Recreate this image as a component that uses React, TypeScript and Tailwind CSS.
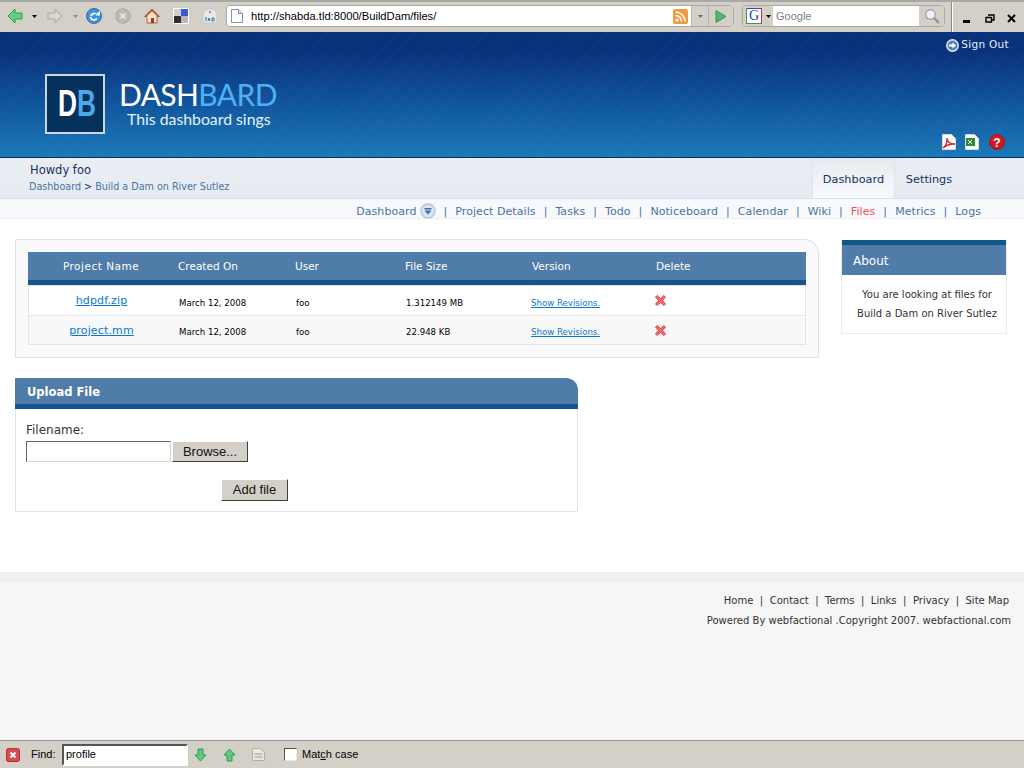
import React from 'react'

const navItems = ['Project Details', 'Tasks', 'Todo', 'Noticeboard', 'Calendar', 'Wiki', 'Files', 'Metrics', 'Logs']
const footerLinks = ['Home', 'Contact', 'Terms', 'Links', 'Privacy', 'Site Map']
const rows = [
  { name: 'hdpdf.zip', size: '1.312149 MB', bg: 'bg-white' },
  { name: 'project.mm', size: '22.948 KB', bg: 'bg-[#f8f8f8]' },
]
const tableCols = 'grid grid-cols-[146px_117px_110px_127px_124px_1fr]'

const BackIcon = () => (
  <svg width="16" height="16" viewBox="0 0 16 16">
    <path d="M1 8 8 1v4h7v6H8v4z" fill="#5fd47c" stroke="#2f9a50" />
  </svg>
)

const ForwardIcon = () => (
  <svg width="16" height="16" viewBox="0 0 16 16">
    <path d="M15 8 8 1v4H1v6h7v4z" fill="#d6d6d0" stroke="#a8a8a2" />
  </svg>
)

const Caret = ({ color = '#000' }: { color?: string }) => (
  <svg width="5" height="3" viewBox="0 0 5 3"><path d="M0 0h5L2.5 3z" fill={color} /></svg>
)

const Toolbar = () => (
  <div className="h-[32px] shrink-0 bg-[#d4d0c8] border-t-2 border-t-[#a8a8a4] flex items-center pl-[7px] pb-[2px]">
    <BackIcon />
    <span className="ml-[9px] mr-[10px]"><Caret /></span>
    <ForwardIcon />
    <span className="ml-[10px] mr-[8px]"><Caret color="#8a8a86" /></span>
    <svg width="16" height="16" viewBox="0 0 16 16">
      <circle cx="8" cy="8" r="7.5" fill="#3f93d8" stroke="#2a6fb0" />
      <path d="M4 8.5a4 4 0 0 1 7-2.5l-1.6 1.5H14V3l-1.7 1.6" fill="#fff" />
      <path d="M4.5 9a3.6 3.6 0 0 0 6.4 1.6" stroke="#fff" strokeWidth="1.6" fill="none" />
    </svg>
    <svg className="ml-[13px]" width="16" height="16" viewBox="0 0 16 16">
      <circle cx="8" cy="8" r="7.3" fill="#bdbab2" stroke="#aeaba4" />
      <path d="m5.5 5.5 5 5m0-5-5 5" stroke="#e4e2dc" strokeWidth="2" />
    </svg>
    <svg className="ml-[13px]" width="16" height="16" viewBox="0 0 16 16">
      <path d="M8 1 .5 8.5H3V15h10V8.500h2.500z" fill="#f3e4cc" stroke="#a5663a" />
      <path d="M8 1 .5 8.500h2L8 3.200l5.500 5.300h2z" fill="#b5582e" />
      <path d="M7 10h3v5H7z" fill="#a8321e" />
    </svg>
    <svg className="ml-[13px]" width="16" height="16" viewBox="0 0 16 16">
      <path d="M0 0h16v16H0z" fill="#fff" />
      <path d="M1 1h7v7H1z" fill="#d0d0d0" />
      <path d="M8 1h7v7H8z" fill="#3a5bd0" />
      <path d="M1 8h7v7H1z" fill="#2d2d2d" />
      <path d="M8 8h7v7H8z" fill="#b8b8b8" />
    </svg>
    <svg className="ml-[13px]" width="16" height="16" viewBox="0 0 16 16">
      <path d="M4 1h8l3 5v9H1V6z" fill="#e6e8ea" stroke="#c4c6c8" />
      <circle cx="8" cy="4" r="1.200" fill="#9a9a9a" />
      <path d="M3 10h2M4 10v3M6 13l1-3 1 3M10 10h2v3h-2z" stroke="#3d74a8" strokeWidth="1" fill="none" />
    </svg>
    <div className="ml-[8px] w-[508px] h-[22px] bg-white border border-[#a8a8a4] rounded-l-[3px] rounded-r-[5px] flex items-center overflow-hidden">
      <svg className="ml-[4px] shrink-0" width="12" height="14" viewBox="0 0 12 14">
        <path d="M.5.500h7l4 4v9H.5z" fill="#fff" stroke="#7f93ad" />
        <path d="M7.500.500v4h4" fill="#dfe6ef" stroke="#7f93ad" />
      </svg>
      <span className="ml-[8px] text-[11.200px] text-black flex-1 font-['Liberation_Sans',sans-serif]">http://shabda.tld:8000/BuildDam/files/</span>
      <svg className="shrink-0 mr-[3px]" width="15" height="15" viewBox="0 0 15 15">
        <rect width="15" height="15" rx="2" fill="#f49a3c" />
        <circle cx="4" cy="11" r="1.600" fill="#fff" />
        <path d="M2.500 6.500a6 6 0 0 1 6 6M2.500 3a9.500 9.500 0 0 1 9.500 9.500" stroke="#fff" strokeWidth="1.600" fill="none" />
      </svg>
      <div className="w-[17px] h-full bg-[#d4d0c8] border-l border-[#bbb8b0] flex items-center justify-center"><Caret color="#6a6a66" /></div>
      <div className="w-[25px] h-full bg-[#d4d0c8] border-l border-[#bbb8b0] flex items-center justify-center">
        <svg width="12" height="13" viewBox="0 0 12 13"><path d="M1 .500 11 6.500 1 12.500z" fill="#57b36e" stroke="#3c9458" /></svg>
      </div>
    </div>
    <div className="ml-[8px] w-[203px] h-[22px] bg-white border border-[#a8a8a4] rounded-[4px] flex items-center overflow-hidden">
      <div className="w-[30px] h-full bg-[#d4d0c8] flex items-center pl-[3px] gap-[4px] shrink-0">
        <span className="w-[16px] h-[16px] bg-white border border-[#2f9a50] border-t-[#2a50c8] border-r-[#c83030] flex items-center justify-center text-[14px] leading-none text-[#1a3fc0] font-['Liberation_Serif',serif]">G</span>
        <Caret />
      </div>
      <span className="ml-[3px] flex-1 text-[11px] text-[#808080] font-['Liberation_Sans',sans-serif]">Google</span>
      <div className="w-[25px] h-full bg-[#d4d0c8] flex items-center justify-center shrink-0">
        <svg width="16" height="16" viewBox="0 0 16 16">
          <circle cx="6.500" cy="6.500" r="4.800" fill="#eef2f6" stroke="#a0a8b0" strokeWidth="1.400" />
          <path d="m10 10 5 5" stroke="#8e9298" strokeWidth="2.200" />
        </svg>
      </div>
    </div>
    <div className="ml-[6px] -mb-[2px] self-stretch w-[2px] bg-[#8c8a84] border-r border-white" />
    <div className="flex items-center pt-[5px]">
      <svg className="ml-[10px] mt-[6px]" width="7" height="3" viewBox="0 0 7 3"><path d="M0 0h7v3H0z" fill="#000" /></svg>
      <svg className="ml-[15px]" width="10" height="9" viewBox="0 0 10 9">
        <path d="M3 1h6v5H6M1 3.500h5.500v4.500H1z" fill="none" stroke="#000" strokeWidth="1.400" />
      </svg>
      <svg className="ml-[12px]" width="9" height="9" viewBox="0 0 9 9"><path d="m1 1 7 7m0-7-7 7" stroke="#000" strokeWidth="2" /></svg>
    </div>
  </div>
)

const Logo = () => (
  <div className="flex items-start">
    <div className="w-[60px] h-[60px] bg-[#06315a] border-2 border-[#c9d5e1] flex items-center justify-center overflow-hidden pl-[3px] font-['Liberation_Sans',sans-serif] font-bold text-[36px] leading-none">
      <div className="flex scale-x-[0.73]">
        <span className="text-white">D</span>
        <span className="text-[#4aa8ee]">B</span>
      </div>
    </div>
    <div className="ml-[14px] mt-[3px] font-['Lato',sans-serif]">
      <div className="text-[30px] leading-[34px] font-normal text-white tracking-[-0.6px]">DASH<span className="text-[#4fb0f5]">BARD</span></div>
      <div className="ml-[8px] -mt-[2px] text-[15.800px] leading-[20px] text-[#e8f2fa]">This dashboard sings</div>
    </div>
  </div>
)

const HeaderIcons = () => (
  <div className="flex items-center justify-end pr-[19px] -mt-[6px]">
    <svg width="14" height="16" viewBox="0 0 14 16">
      <path d="M.500.500h9l4 4v11H.500z" fill="#fff" stroke="#d8d8d8" />
      <path d="M1 14c3-2 4-6 4-10 0 4 3 6 8 6-5 0-9 1-12 4z" fill="none" stroke="#d8262c" strokeWidth="1.300" />
    </svg>
    <svg className="ml-[9px]" width="14" height="16" viewBox="0 0 14 16">
      <path d="M.500.500h9l4 4v11H.500z" fill="#fff" stroke="#d8d8d8" />
      <path d="M1 4h9v8H1z" fill="#2f8a3f" />
      <path d="m3 6 4 4m0-4-4 4" stroke="#e8f4e8" />
    </svg>
    <svg className="ml-[10px]" width="16" height="16" viewBox="0 0 16 16">
      <circle cx="8" cy="8" r="7.500" fill="#d01820" stroke="#a81218" />
      <text x="8" y="12.500" textAnchor="middle" fontSize="12" fontWeight="700" fill="#fff" fontFamily="Liberation Sans">?</text>
    </svg>
  </div>
)

const Header = () => (
  <div className="h-[126px] shrink-0 flex flex-col border-b-[1px] border-[#06306c] bg-[repeating-linear-gradient(135deg,rgba(255,255,255,0.035)_0px,rgba(255,255,255,0.035)_1px,transparent_1px,transparent_3px),linear-gradient(180deg,#07307a_0%,#07307a_16%,#0f569f_60%,#1a78b8_100%)]">
    <div className="h-[24px] flex items-center justify-end pr-[15px] pt-[2px] gap-[2px] shrink-0">
      <svg width="13" height="13" viewBox="0 0 13 13">
        <circle cx="6.500" cy="6.500" r="5.700" fill="#5a82b8" stroke="#e8eef6" strokeWidth="1.400" />
        <path d="M3 5.500h3.500V3.500l3.500 3-3.500 3v-2H3z" fill="#fff" />
      </svg>
      <span className="text-[10.500px] text-[#e8eef6] tracking-[0.3px]">Sign Out</span>
    </div>
    <div className="pl-[45px] pt-[18px] h-[84px] shrink-0"><Logo /></div>
    <HeaderIcons />
  </div>
)

const SubHeader = () => (
  <div className="h-[41px] shrink-0 flex justify-between bg-gradient-to-b from-[#eaeef2] to-[#e6ebf4] border-b border-[#d8dde6]">
    <div className="pl-[30px] pt-[4px]">
      <div className="text-[11.500px] leading-[16px] text-[#17315f]">Howdy foo</div>
      <div className="text-[9.600px] leading-[18px] -ml-px text-[#4a74a0]">Dashboard <span className="text-[#17315f]">&gt;</span> Build a Dam on River Sutlez</div>
    </div>
    <div className="flex mr-[61px] text-[11.300px] text-[#17315f]">
      <div className="w-[83px] flex items-center justify-center pt-[4px] bg-gradient-to-b from-[#e6ebf0] to-[#f8f9fc] border-x border-[#dfe4ec]">Dashboard</div>
      <div className="w-[68px] flex items-center justify-center pt-[4px]">Settings</div>
    </div>
  </div>
)

const SubNav = () => (
  <div className="h-[20px] shrink-0 bg-[#f8f9fd] border-b border-[#eceef2] flex items-center justify-end pr-[43px] pt-[7px] text-[11px] tracking-[0.07px] text-[#4a74a0]">
    <span>Dashboard</span>
    <svg className="ml-[3px] -mt-[3px]" width="16" height="16" viewBox="0 0 16 16">
      <circle cx="8" cy="8" r="7" fill="#dbe6f3" stroke="#b4c6dc" strokeWidth="1.400" />
      <path d="M4.500 5h7v1.500h-7zM4.500 7.500h7L8 11.500z" fill="#3f6fa8" />
    </svg>
    {navItems.map((item) => (
      <React.Fragment key={item}>
        <span className="mx-[8px] text-[#4a74a0]">|</span>
        <span className={item === 'Files' ? 'text-[#f0505a]' : ''}>{item}</span>
      </React.Fragment>
    ))}
  </div>
)

const DeleteIcon = () => (
  <svg width="13" height="13" viewBox="0 0 13 13">
    <path d="M1.500 3 3 1.500l3.500 3 3.500-3L11.500 3l-3 3.500 3 3.500-1.500 1.500-3.500-3-3.500 3L1.500 10l3-3.500z" fill="#f4686c" stroke="#e04a50" strokeLinejoin="round" />
  </svg>
)

const FilesTable = () => (
  <div className="h-[119px] bg-[#fafafc] border border-[#dde1ea] rounded-tr-[14px] p-[12px]">
    <div className={`${tableCols} h-[28px] bg-[#4f7ca8] items-center pt-[2px] text-[10.500px] text-white [&>div]:pl-[4px]`}>
      <div className="text-center tracking-[0.5px] pr-[4px]">Project Name</div>
      <div>Created On</div>
      <div>User</div>
      <div>File Size</div>
      <div>Version</div>
      <div>Delete</div>
    </div>
    <div className="h-[5px] bg-[#13568c]" />
    <div className="border-x border-b border-[#e2e4e8] border-t-[1px] border-t-[#e2e4e8]">
      {rows.map((row, i) => (
        <div key={row.name} className={`${tableCols} h-[29px] items-center pt-[3px] text-[8.600px] text-black ${row.bg} ${i > 0 ? 'border-t border-[#e2e4e8]' : ''} [&>div]:pl-[4px]`}>
          <div className="text-center -mt-[1px] pr-[5px] text-[11px] tracking-[0.15px]"><a className="text-[#0a78d2] underline">{row.name}</a></div>
          <div className="pt-[2px]">March 12, 2008</div>
          <div className="pt-[2px]">foo</div>
          <div className="pt-[2px]">{row.size}</div>
          <div className="-ml-[2px] pt-[2px]"><a className="text-[#0a78d2] underline">Show Revisions.</a></div>
          <div className="-ml-[3px] -mt-[3px]"><DeleteIcon /></div>
        </div>
      ))}
    </div>
  </div>
)

const UploadForm = () => (
  <div className="w-[563px] mt-[20px]">
    <div className="h-[26px] bg-[#4f7ca8] rounded-tr-[12px] pl-[12px] pt-[3px] flex items-center text-[11.500px] font-bold text-white">Upload File</div>
    <div className="h-[5px] bg-[#13568c]" />
    <div className="h-[103px] border-x border-b border-[#e2e4e8] bg-white pl-[10px] pt-[13px]">
      <div className="text-[12px] leading-[16px] text-[#333]">Filename:</div>
      <div className="flex mt-[3px] items-start">
        <div className="w-[145px] h-[21px] bg-white border border-t-[#666] border-l-[#666] border-r-[#d4d0c8] border-b-[#d4d0c8]" />
        <div className="ml-[1px] w-[76px] h-[21px] bg-[#d4d0c8] border-r border-b border-r-[#404040] border-b-[#404040] border-t border-l border-t-white border-l-white flex items-center justify-center text-[13px] text-[#111] font-['Liberation_Sans',sans-serif]">Browse...</div>
      </div>
      <div className="mt-[17px] ml-[195px] w-[67px] h-[22px] bg-[#d4d0c8] border-r border-b border-r-[#404040] border-b-[#404040] border-t border-l border-t-white border-l-white flex items-center justify-center text-[13px] text-[#111] font-['Liberation_Sans',sans-serif]">Add file</div>
    </div>
  </div>
)

const AboutBox = () => (
  <div className="w-[166px] mt-[21px] ml-[22px] shrink-0 self-start border-x border-b border-[#e8ebf0]">
    <div className="h-[5px] bg-[#13568c]" />
    <div className="h-[30px] bg-[#4f7ca8] pl-[11px] pt-[1px] flex items-center text-[12px] text-white">About</div>
    <div className="h-[58px] pt-[10px] text-center text-[10px] leading-[19px] text-[#333] pl-[6px]">
      <div>You are looking at files for</div>
      <div>Build a Dam on River Sutlez</div>
    </div>
  </div>
)

const Footer = () => (
  <div className="flex-1 bg-[#f6f6f6] border-t-[10px] border-[#f0f0f0] pr-[15px] pt-[12px] text-[10px] text-[#333] flex flex-col items-end">
    <div className="leading-[14px]">
      {footerLinks.map((link, i) => (
        <span key={link}>{i > 0 && <span className="mx-[6.500px]">|</span>}{link}</span>
      ))}
    </div>
    <div className="leading-[14px] mt-[6px] mr-[-2px]">Powered By webfactional .Copyright 2007. webfactional.com</div>
  </div>
)

const FindBar = () => (
  <div className="h-[28px] shrink-0 bg-[#d4d0c8] border-t border-[#9a9894] flex items-center pl-[6px] text-[11px] text-black font-['Liberation_Sans',sans-serif]">
    <svg width="14" height="14" viewBox="0 0 14 14">
      <rect x=".5" y=".5" width="13" height="13" rx="2" fill="#d84a50" stroke="#a83038" />
      <path d="m4.500 4.500 5 5m0-5-5 5" stroke="#fff" strokeWidth="2" />
    </svg>
    <span className="ml-[11px] w-[25px]">Find:</span>
    <div className="ml-[6px] w-[126px] h-[22px] bg-white border-2 border-t-[#555] border-l-[#555] border-r-white border-b-white pl-[2px] flex items-center">profile</div>
    <svg className="ml-[6px]" width="13" height="14" viewBox="0 0 13 14"><path d="M6.500 13 12 7H9V1H4v6H1z" fill="#5fc97c" stroke="#2f9a50" /></svg>
    <svg className="ml-[16px]" width="13" height="14" viewBox="0 0 13 14"><path d="M6.500 1 12 7H9v6H4V7H1z" fill="#5fc97c" stroke="#2f9a50" /></svg>
    <svg className="ml-[16px]" width="13" height="13" viewBox="0 0 13 13">
      <path d="M.500.500h8l4 4v8H.500z" fill="#e8e8e4" stroke="#b0b0aa" />
      <path d="M2.500 6h8M2.500 9h8" stroke="#9a9a94" />
    </svg>
    <div className="ml-[19px] w-[13px] h-[13px] bg-white border border-t-[#555] border-l-[#555] border-r-[#e8e8e4] border-b-[#e8e8e4]" />
    <span className="ml-[5px]">Mat<span className="underline">c</span>h case</span>
  </div>
)

export default function App() {
  return (
    <div className="w-[1024px] h-[768px] overflow-hidden flex flex-col bg-white font-['DejaVu_Sans',sans-serif]">
      <Toolbar />
      <Header />
      <SubHeader />
      <SubNav />
      <div className="flex h-[353px] shrink-0 pl-[15px]">
        <div className="w-[804px] pt-[20px] shrink-0">
          <FilesTable />
          <UploadForm />
        </div>
        <AboutBox />
      </div>
      <Footer />
      <FindBar />
    </div>
  )
}
